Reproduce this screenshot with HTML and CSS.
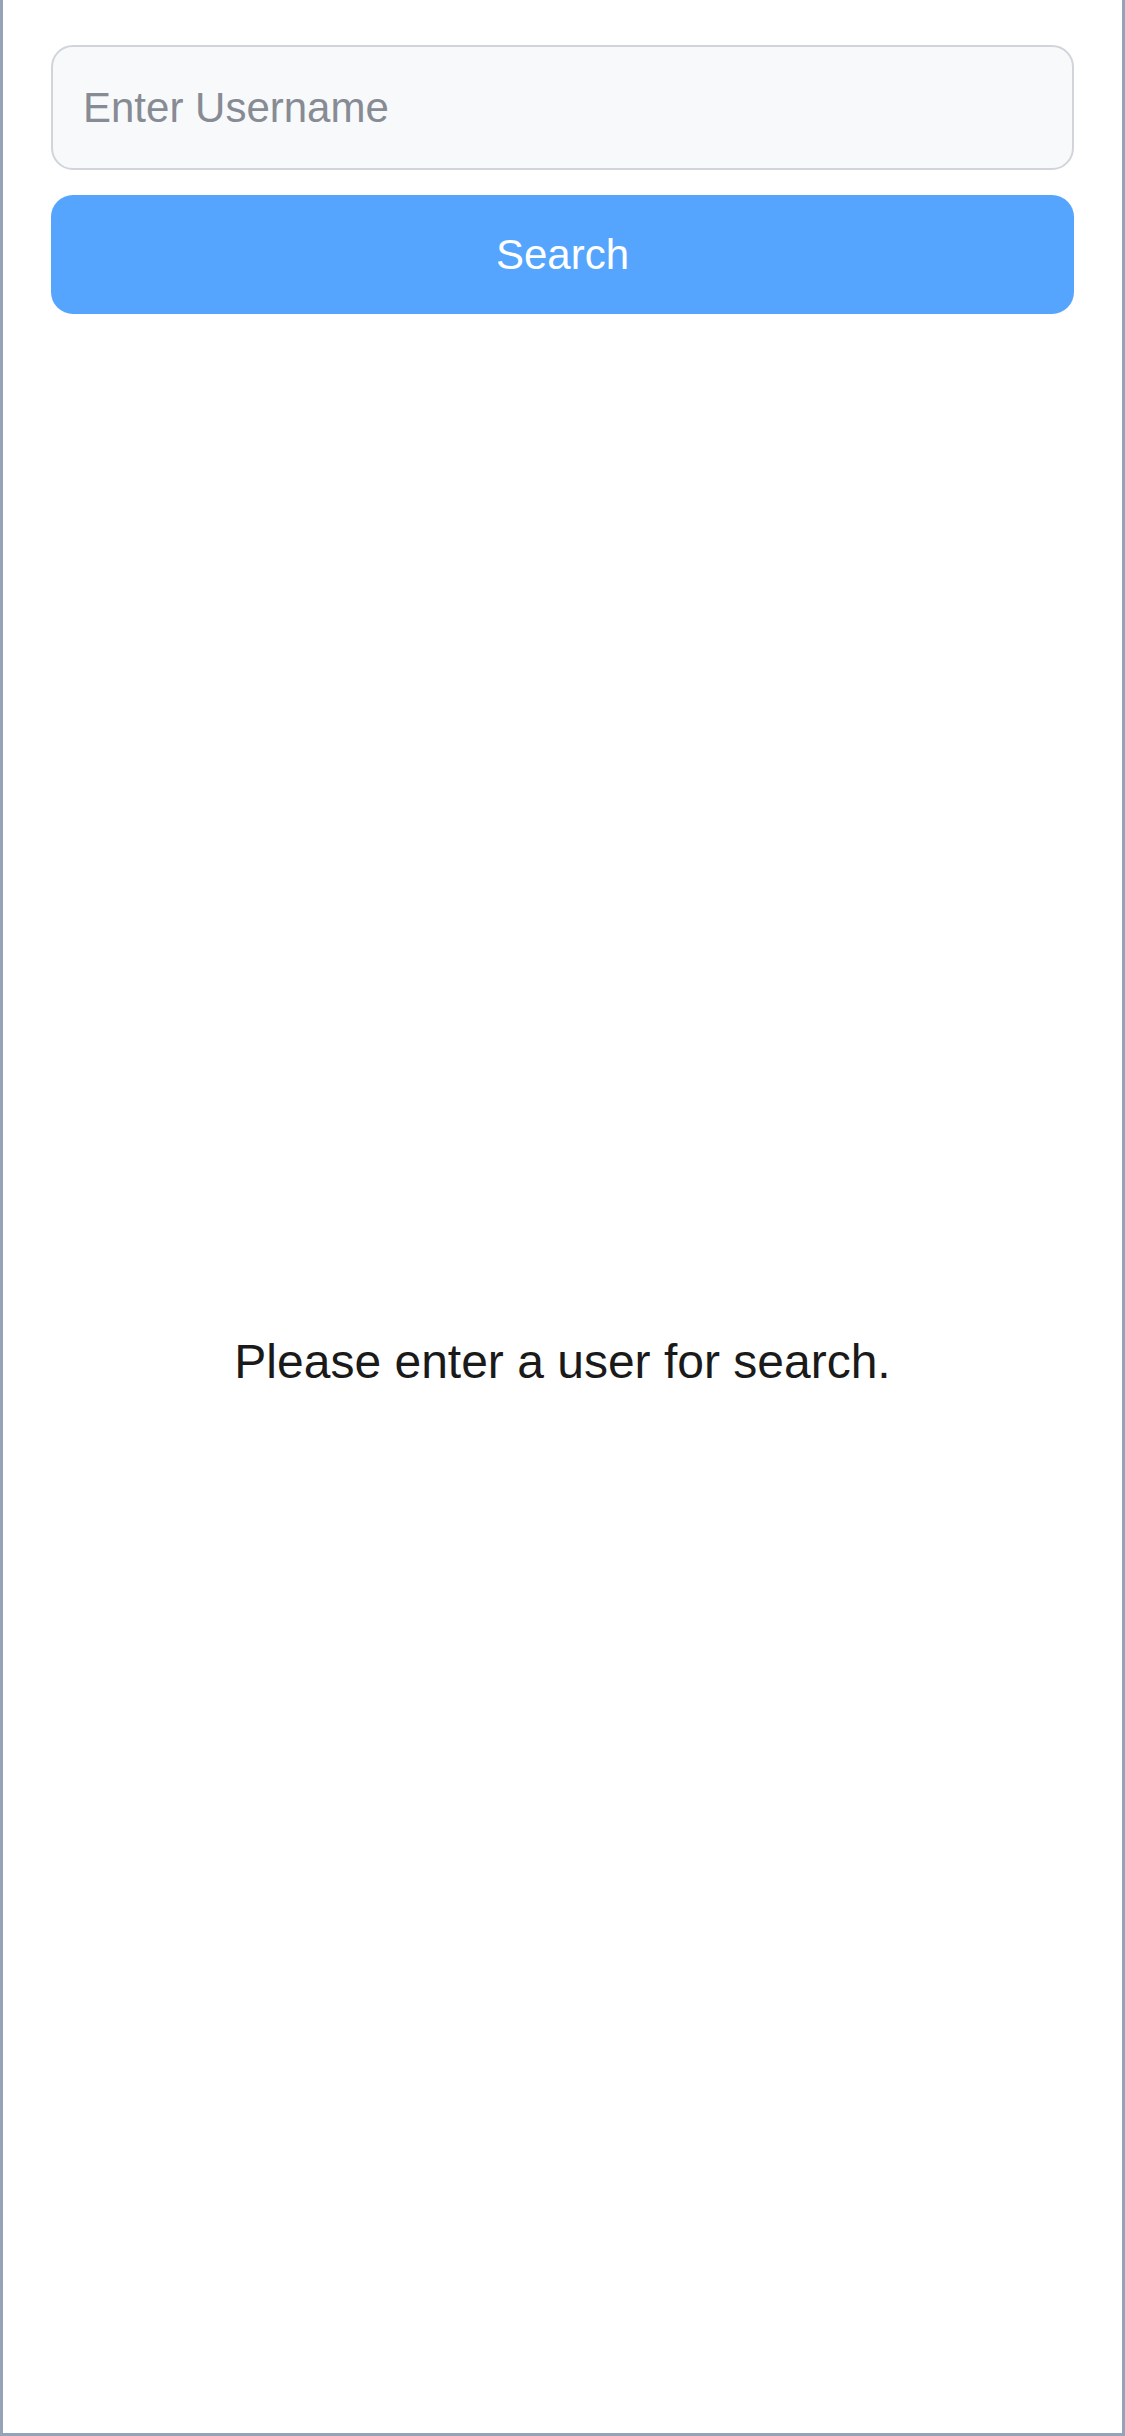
FILE: index.html
```html
<!DOCTYPE html>
<html>
<head>
<meta charset="utf-8">
<link rel="stylesheet" href="styles.css">
</head>
<body>
<div class="app">
  <div class="search">
    <input class="username" type="text" placeholder="Enter Username">
    <button class="search-btn">Search</button>
  </div>
  <div class="empty">
    <p class="empty-text">Please enter a user for search.</p>
  </div>
</div>
</body>
</html>
```

FILE: styles.css
```css
html, body {
  margin: 0;
  padding: 0;
  background: #ffffff;
}
.app {
  box-sizing: border-box;
  width: 1125px;
  height: 2436px;
  border: 3px solid #94a3b8;
  border-top: none;
  padding: 45px 48px 24px;
  display: flex;
  flex-direction: column;
  font-family: "Liberation Sans", Arial, sans-serif;
}
.search {
  display: flex;
  flex-direction: column;
  gap: 25px;
}
.username {
  box-sizing: border-box;
  height: 125px;
  width: 100%;
  border: 2px solid #d1d5db;
  border-radius: 22px;
  background: #f8f9fa;
  padding: 0 30px;
  font-family: "Liberation Sans", Arial, sans-serif;
  font-size: 42px;
  color: #111;
  outline: none;
}
.username::placeholder {
  color: #878b94;
}
.search-btn {
  height: 119px;
  width: 100%;
  border: none;
  border-radius: 22px;
  background: #55a5fe;
  color: #ffffff;
  font-family: "Liberation Sans", Arial, sans-serif;
  font-size: 42px;
}
.empty {
  flex: 1;
  display: flex;
  align-items: center;
  justify-content: center;
}
.empty-text {
  margin: 0;
  font-size: 48px;
  color: #1a1a1a;
}
```
